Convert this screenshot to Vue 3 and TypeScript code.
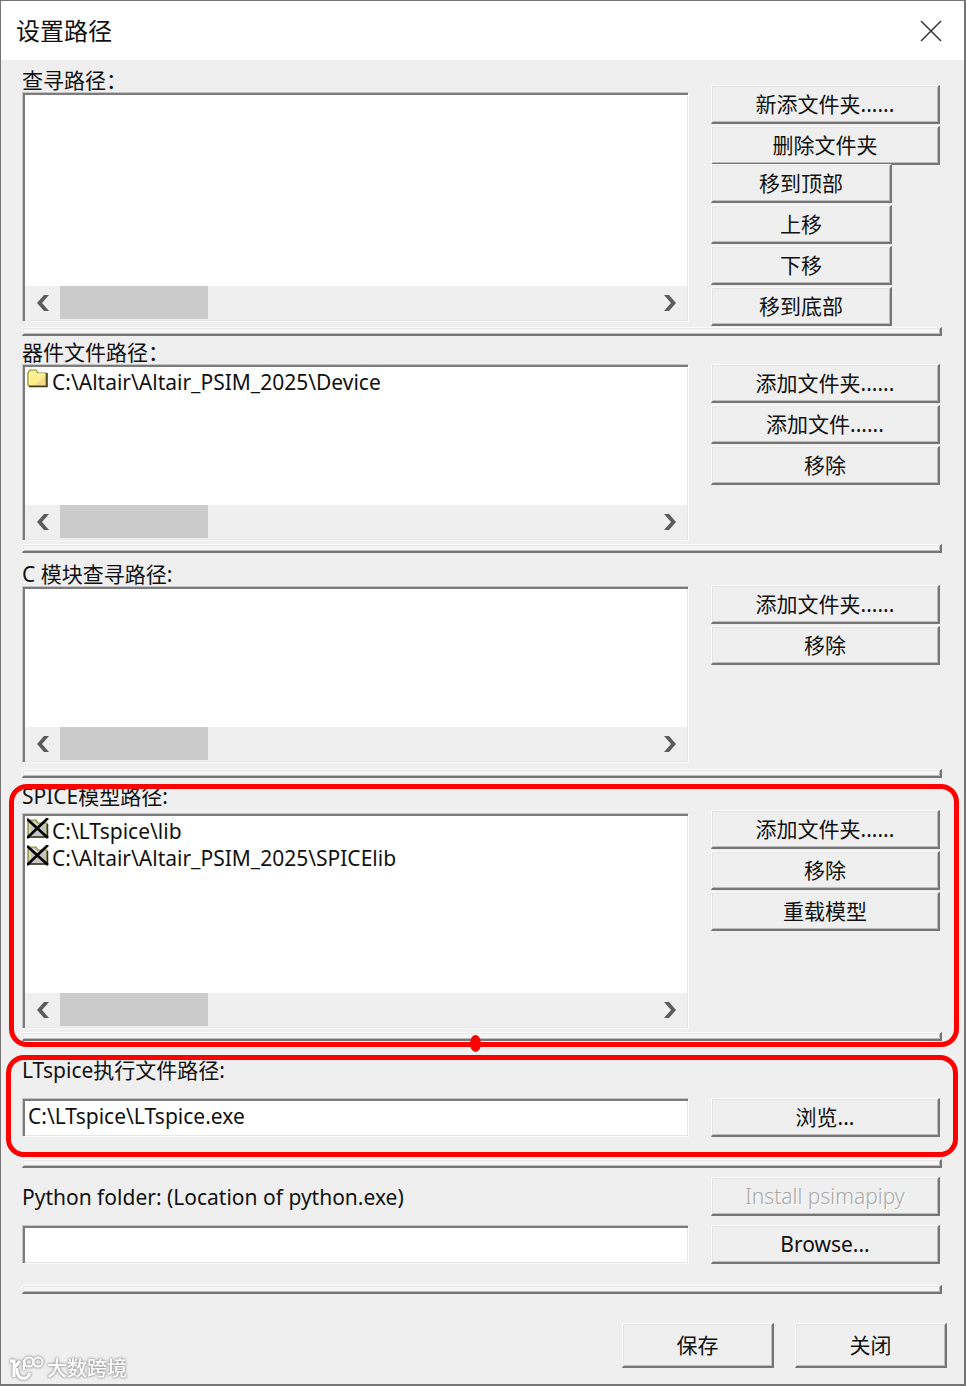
<script setup lang="ts">
import { ref } from 'vue'

interface PathItem {
  text: string
  excluded: boolean
}
interface PathAction {
  text: string
  narrow?: boolean
}
interface PathGroup {
  id: string
  label: string
  items: PathItem[]
  actions: PathAction[]
  marked?: boolean
}

const groups: PathGroup[] = [
  {
    id: 'search',
    label: '查寻路径：',
    items: [],
    actions: [
      { text: '新添文件夹......' },
      { text: '删除文件夹' },
      { text: '移到顶部', narrow: true },
      { text: '上移', narrow: true },
      { text: '下移', narrow: true },
      { text: '移到底部', narrow: true },
    ],
  },
  {
    id: 'device',
    label: '器件文件路径：',
    items: [{ text: 'C:\\Altair\\Altair_PSIM_2025\\Device', excluded: false }],
    actions: [{ text: '添加文件夹......' }, { text: '添加文件......' }, { text: '移除' }],
  },
  {
    id: 'cblock',
    label: 'C 模块查寻路径:',
    items: [],
    actions: [{ text: '添加文件夹......' }, { text: '移除' }],
  },
  {
    id: 'spice',
    label: 'SPICE模型路径:',
    items: [
      { text: 'C:\\LTspice\\lib', excluded: true },
      { text: 'C:\\Altair\\Altair_PSIM_2025\\SPICElib', excluded: true },
    ],
    actions: [{ text: '添加文件夹......' }, { text: '移除' }, { text: '重载模型' }],
    marked: true,
  },
]

const ltspicePath = ref('C:\\LTspice\\LTspice.exe')
const pythonPath = ref('')
</script>

<template>
  <main class="dialog">
    <header class="titlebar">
      <h1 class="title">设置路径</h1>
      <button class="close" type="button" aria-label="关闭窗口">
        <svg width="22" height="22" viewBox="0 0 22 22">
          <path d="M1 1L21 21M21 1L1 21" stroke="#333" stroke-width="1.5" fill="none" />
        </svg>
      </button>
    </header>

    <section v-for="g in groups" :key="g.id" class="group" :class="g.id">
      <div class="columns">
        <div class="left">
          <span :id="g.id + '-label'" class="label">{{ g.label }}</span>
          <div class="listbox">
            <ul class="items" role="listbox" :aria-labelledby="g.id + '-label'">
              <li v-for="item in g.items" :key="item.text" class="item" role="option">
                <svg v-if="!item.excluded" class="icon" width="22" height="20" viewBox="0 0 22 20">
                  <path d="M1 16V4L3 1H9L11 4H19V17H2Z" fill="#fbf08c" stroke="#8f8420" stroke-width="1.2" />
                  <path d="M8 16L18 7V16Z" fill="#f6d98c" />
                  <path d="M2 5H18M2.500 5V15" stroke="#fffcc8" stroke-width="1.2" fill="none" />
                  <path d="M2 17.500H20V4" stroke="#3d3a18" stroke-width="1.600" fill="none" />
                </svg>
                <svg v-else class="icon" width="22" height="21" viewBox="0 0 22 21">
                  <path d="M1 18V4L3 2H9L11 5H20V19H1Z" fill="#c4c4c4" stroke="#85852a" stroke-width="1.200" />
                  <path d="M3 17V5H8L10 7" stroke="#f0f0a0" fill="none" />
                  <path d="M2 19H20.500V6" stroke="#333" stroke-width="1.500" fill="none" />
                  <path d="M0 1L21 20M21 0L0 20" stroke="#000" stroke-width="2.600" fill="none" />
                </svg>
                <span>{{ item.text }}</span>
              </li>
            </ul>
            <div class="scrollbar">
              <button class="arrow" type="button" aria-label="向左滚动">
                <svg width="14" height="16" viewBox="0 0 14 16">
                  <path d="M8 0H13L6 8L13 16H8L1 8Z" fill="#5c5c5c" />
                </svg>
              </button>
              <div class="thumb"></div>
              <button class="arrow" type="button" aria-label="向右滚动">
                <svg width="14" height="16" viewBox="0 0 14 16">
                  <path d="M6 0H1L8 8L1 16H6L13 8Z" fill="#5c5c5c" />
                </svg>
              </button>
            </div>
          </div>
        </div>
        <div class="actions">
          <button
            v-for="a in g.actions"
            :key="a.text"
            class="btn"
            :class="{ narrow: a.narrow }"
            type="button"
          >{{ a.text }}</button>
        </div>
      </div>
      <div class="divider"></div>
      <div v-if="g.marked" class="mark"><i class="knob"></i></div>
    </section>

    <section class="group ltspice">
      <label class="label" for="ltspice-path">LTspice执行文件路径:</label>
      <div class="columns row">
        <input id="ltspice-path" v-model="ltspicePath" class="field" type="text" />
        <div class="actions"><button class="btn" type="button">浏览...</button></div>
      </div>
      <div class="divider"></div>
      <div class="mark"></div>
    </section>

    <section class="group python">
      <div class="columns row">
        <label class="label" for="python-path">Python folder: (Location of python.exe)</label>
        <div class="actions"><button class="btn" type="button" disabled>Install psimapipy</button></div>
      </div>
      <div class="columns row">
        <input id="python-path" v-model="pythonPath" class="field" type="text" />
        <div class="actions"><button class="btn" type="button">Browse...</button></div>
      </div>
      <div class="divider"></div>
    </section>

    <footer class="footer">
      <button class="btn" type="button">保存</button>
      <button class="btn" type="button">关闭</button>
    </footer>

    <div class="watermark">
      <svg width="36" height="26" viewBox="0 0 36 26" fill="none" stroke="#fff">
        <path d="M1 5H5V21M5 12L11 5" stroke-width="3" />
        <path d="M8 12C7 23 17 26 21 17" stroke-width="3" />
        <circle cx="20" cy="6" r="4.500" stroke-width="2" />
        <circle cx="29" cy="6" r="4.500" stroke-width="2" />
        <path d="M15 4V14" stroke-width="2" />
      </svg>
      <span>大数跨境</span>
    </div>
  </main>
</template>

<style>
body {
  margin: 0;
  background: #efefef;
}
</style>

<style scoped>
* {
  box-sizing: border-box;
}
.dialog {
  position: relative;
  min-height: 100vh;
  padding-bottom: 16px;
  border: 1px solid #757575;
  border-right-width: 2px;
  border-bottom-width: 2px;
  background: #efefef;
  color: #111;
  font-family: "Noto Sans", "Noto Sans CJK SC", sans-serif;
  font-size: 21px;
  line-height: 24px;
}
.titlebar {
  display: flex;
  align-items: center;
  justify-content: space-between;
  height: 59px;
  padding: 0 22px 0 15px;
  background: #fff;
}
.title {
  margin: 0;
  font-size: 24px;
  font-weight: 400;
}
.close {
  display: flex;
  padding: 0;
  border: 0;
  background: none;
}
.group {
  position: relative;
  padding: 0 22px 0 21px;
}
.columns {
  display: flex;
  gap: 22px;
}
.left {
  flex: 1;
  min-width: 0;
}
.label {
  display: block;
  height: 24px;
  white-space: nowrap;
}
.listbox,
.field {
  border: 1px solid #c4c4c4;
  border-right-color: #fafafa;
  border-bottom-color: #fafafa;
  background: #fff;
  box-shadow: inset 2px 2px #7c7c7c, inset -1px -1px #e6e6e6;
}
.listbox {
  display: flex;
  flex-direction: column;
  height: 177px;
  padding: 2px 1px 1px 2px;
}
.items {
  flex: 1;
  margin: 0;
  padding: 2px 0 0 2px;
  list-style: none;
}
.item {
  display: flex;
  gap: 3px;
  height: 27px;
  line-height: 27px;
  white-space: nowrap;
}
.scrollbar {
  display: flex;
  height: 34px;
  padding-bottom: 1px;
  background: #efefef;
}
.arrow {
  display: flex;
  align-items: center;
  justify-content: center;
  width: 35px;
  padding: 0;
  border: 0;
  background: none;
}
.thumb {
  width: 148px;
  margin-right: auto;
  background: #cbcbcb;
}
.actions {
  display: flex;
  flex-direction: column;
  gap: 2px;
  width: 231px;
  padding-right: 2px;
}
.btn,
.divider {
  border: 1px solid #fcfcfc;
  border-right: 2px solid #757575;
  border-bottom: 2px solid #757575;
  box-shadow: inset 1px 1px #e4e4e4, inset -1px -1px #bdbdbd;
}
.btn {
  width: 100%;
  height: 39px;
  padding: 0;
  border-radius: 0;
  background: #efefef;
  color: #111;
  font: inherit;
  white-space: nowrap;
}
.btn:disabled {
  color: #a8a8a8;
  font-weight: 300;
  text-shadow: 1px 1px #fff;
}
.narrow {
  width: 181px;
}
.btn:not(.narrow) + .narrow {
  margin-top: -3px;
}
.divider {
  height: 9px;
  background: #f6f6f6;
}
.search .left {
  padding-top: 8px;
}
.search .listbox {
  height: 230px;
}
.search .actions {
  padding: 25px 2px 1px 0;
}
.device .left {
  padding: 4px 0 3px;
}
.device .actions {
  padding-top: 28px;
}
.cblock .left {
  padding: 9px 0 6px;
}
.cblock .actions {
  padding-top: 32px;
}
.spice .left {
  padding: 6px 0 3px;
}
.spice .label {
  margin-bottom: 5px;
}
.spice .listbox {
  height: 216px;
}
.spice .actions {
  padding-top: 32px;
}
.ltspice {
  padding-top: 17px;
}
.ltspice .row {
  padding: 16px 0 22px;
}
.field {
  flex: 1;
  min-width: 0;
  height: 39px;
  padding: 0 4px 3px 5px;
  border-radius: 0;
  color: #111;
  font: inherit;
}
.python .row {
  align-items: center;
  padding-top: 9px;
}
.python .label {
  flex: 1;
}
.python .divider {
  margin-top: 21px;
}
.footer {
  display: flex;
  justify-content: flex-end;
  gap: 21px;
  padding: 29px 17px 0 0;
}
.footer .btn {
  width: 152px;
  height: 45px;
}
.mark {
  position: absolute;
  inset: 6px 5px -6px 8px;
  border: 5px solid #f00;
  border-radius: 18px;
  pointer-events: none;
}
.ltspice .mark {
  inset: 14px 6px 11px 5px;
}
.knob {
  position: absolute;
  bottom: -10px;
  left: 50%;
  width: 11px;
  height: 17px;
  margin-left: -14px;
  border-radius: 50%;
  background: #f00;
}
.watermark {
  position: absolute;
  bottom: 2px;
  left: 8px;
  display: flex;
  align-items: center;
  gap: 2px;
  color: #fff;
  font-size: 20px;
  font-weight: 500;
  filter: drop-shadow(0 0 1px #999) drop-shadow(0 0 1px #aaa);
}
</style>
